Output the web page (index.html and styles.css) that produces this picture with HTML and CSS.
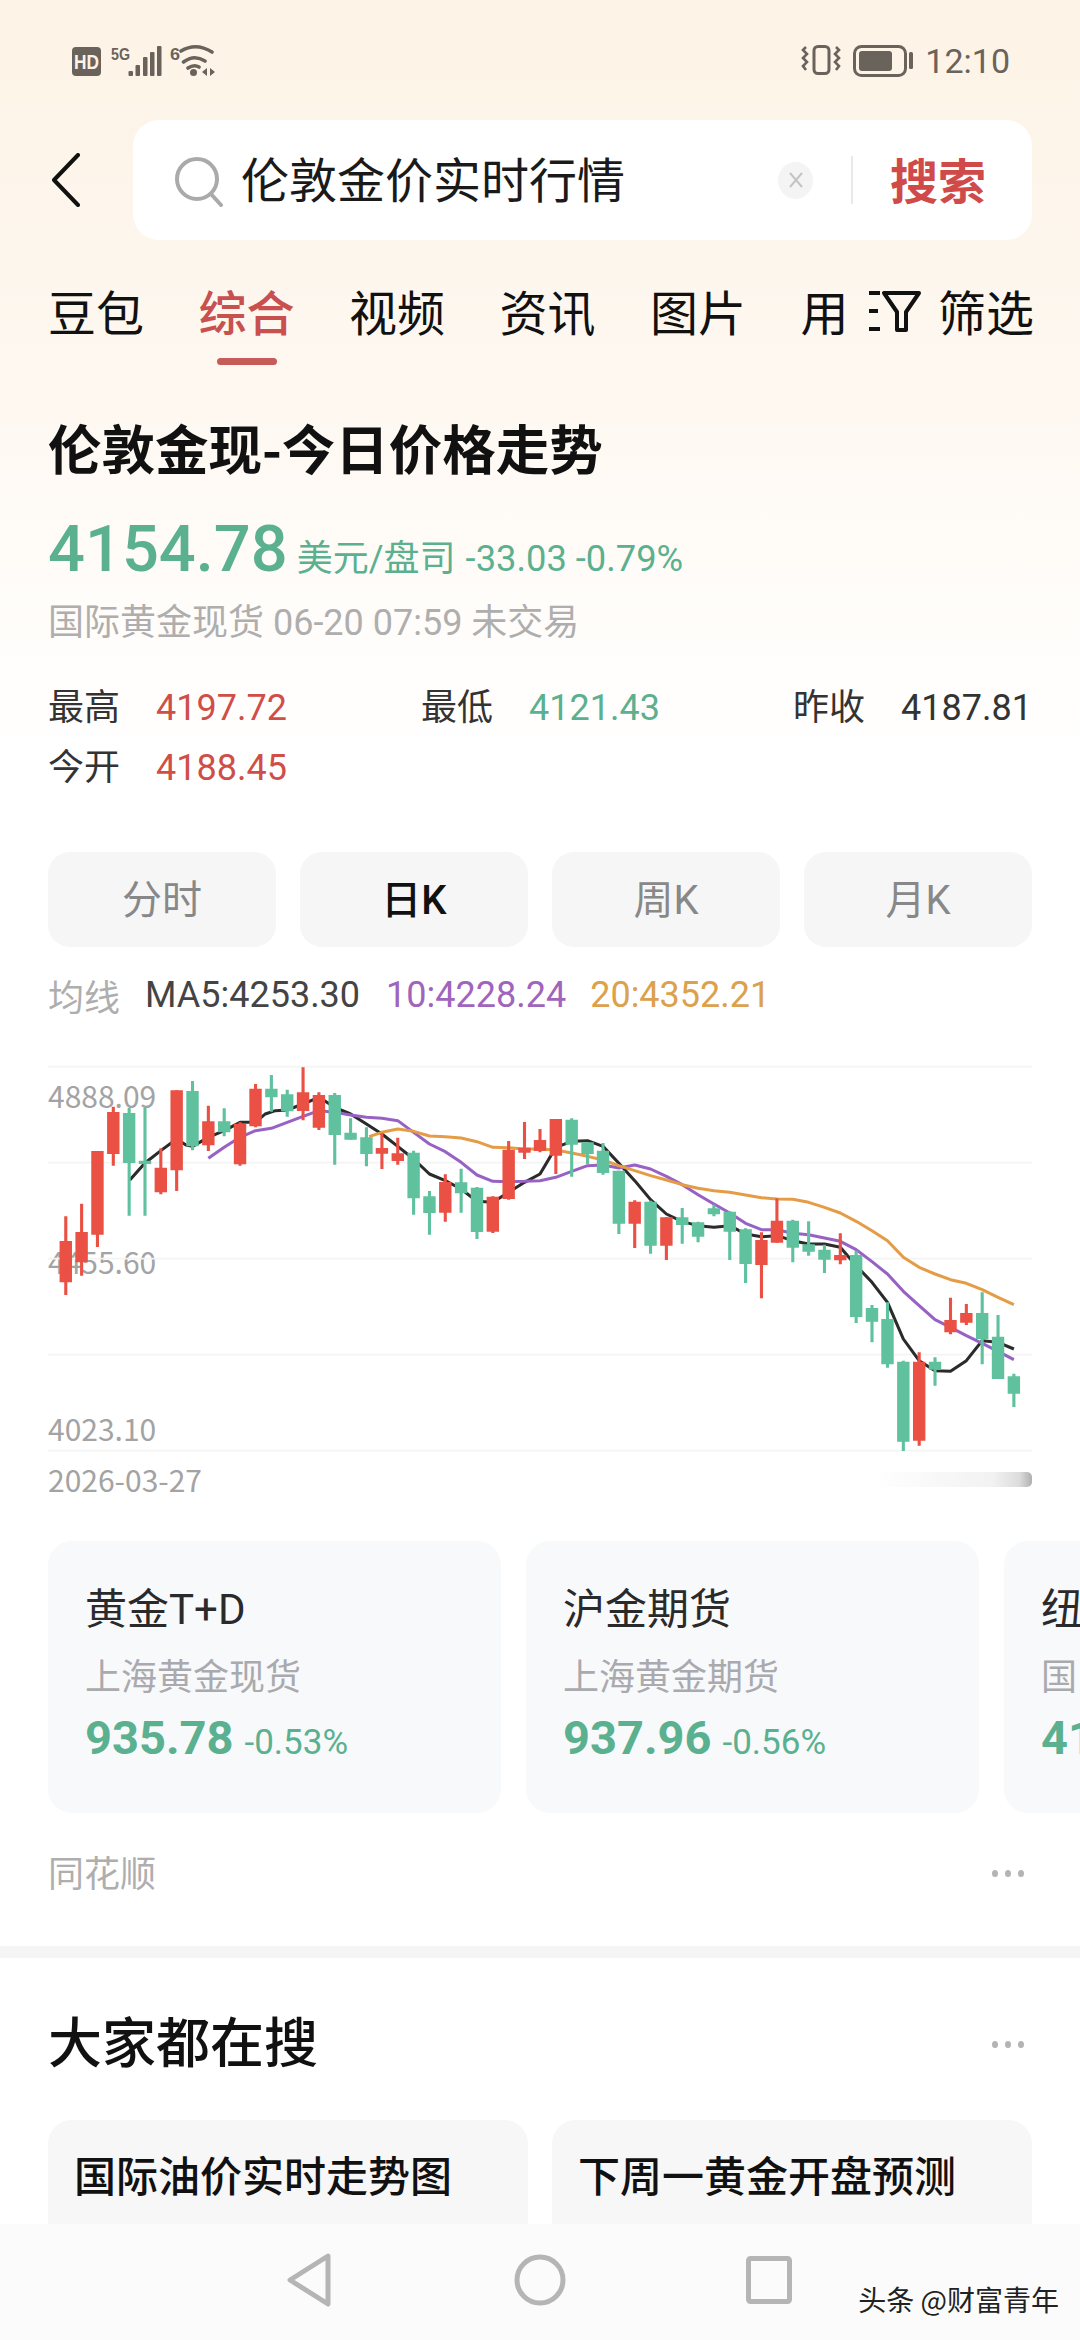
FILE: index.html
```html
<!DOCTYPE html>
<html lang="zh-CN">
<head>
<meta charset="utf-8">
<title>伦敦金价实时行情</title>
<link rel="stylesheet" href="styles.css">
</head>
<body>
<div class="screen">
  <div class="status">
    <svg class="st-left" width="146" height="34" viewBox="70 44 146 34">
      <rect x="72" y="47" width="29" height="29" rx="4" fill="#6a635c"/>
      <text x="74" y="69" class="st-hd" textLength="25" lengthAdjust="spacingAndGlyphs">HD</text>
      <text x="111" y="60" class="st-net" textLength="19" lengthAdjust="spacingAndGlyphs">5G</text>
      <rect x="128.5" y="71" width="4.5" height="5" rx="1" fill="#6a635c"/>
      <rect x="135.5" y="65" width="4.5" height="11" rx="1" fill="#6a635c"/>
      <rect x="143" y="57" width="4.5" height="19" rx="1" fill="#6a635c"/>
      <rect x="150" y="52" width="4.5" height="24" rx="1" fill="#6a635c"/>
      <rect x="157" y="46" width="4.5" height="30" rx="1" fill="#6a635c"/>
      <text x="170" y="60" class="st-net" textLength="10" lengthAdjust="spacingAndGlyphs">6</text>
      <path d="M181 51Q196 42 212 52M183.500 62Q194 54 205 61M188 68Q194 64 199 67" fill="none" stroke="#6a635c" stroke-width="3.600" stroke-linecap="round"/>
      <circle cx="193.500" cy="72.500" r="3.500" fill="#6a635c"/>
      <path d="M202 72l5-4v8zM210 68l5 4-5 4z" fill="#6a635c"/>
    </svg>
    <div class="st-right">
      <svg width="114" height="36" viewBox="802 44 114 36">
        <rect x="816" y="47.500" width="15" height="27" rx="4" fill="none" stroke="#6a635c" stroke-width="3"/>
        <path d="M808 48l-3 3 4 4-4 4 4 4-4 4 3 4M838 48l3 3-4 4 4 4-4 4 4 4-3 4" fill="none" stroke="#6a635c" stroke-width="2.600"/>
        <rect x="856.500" y="47.500" width="51" height="29" rx="7" fill="none" stroke="#6a635c" stroke-width="3"/>
        <rect x="861" y="52" width="33" height="20" rx="3" fill="#6a635c"/>
        <rect x="911" y="53" width="4" height="17" rx="1.500" fill="#6a635c"/>
      </svg>
      <span class="time">12:10</span>
    </div>
  </div>

  <div class="search-row">
    <svg class="back" width="30" height="54" viewBox="0 0 30 54"><path d="M27 2L3 27l24 25" fill="none" stroke="#111" stroke-width="4" stroke-linecap="round" stroke-linejoin="round"/></svg>
    <div class="search-box">
      <svg class="s-icon" width="50" height="50" viewBox="0 0 50 50"><circle cx="23" cy="22" r="20" fill="none" stroke="#aaa" stroke-width="4"/><path d="M37 37l10 11" stroke="#aaa" stroke-width="4" stroke-linecap="round"/></svg>
      <span class="s-text">伦敦金价实时行情</span>
      <span class="s-clear"><svg width="16" height="18" viewBox="0 0 16 18"><path d="M2 2l12 14M14 2L2 16" stroke="#c4c4c4" stroke-width="2"/></svg></span>
      <span class="s-div"></span>
      <span class="s-btn">搜索</span>
    </div>
  </div>

  <div class="tabs">
    <div class="tab">豆包</div>
    <div class="tab tab-on">综合<i class="tab-bar"></i></div>
    <div class="tab">视频</div>
    <div class="tab">资讯</div>
    <div class="tab">图片</div>
    <div class="tab tab-cut">用</div>
    <div class="filter">
      <svg width="54" height="42" viewBox="0 0 54 42"><path d="M1 3h11M1 21h9M1 39h11" stroke="#111" stroke-width="4"/><path d="M16 3h35L38 22v18H29V22z" fill="none" stroke="#111" stroke-width="4" stroke-linejoin="round"/></svg>
      <span>筛选</span>
    </div>
  </div>

  <h1 class="title">伦敦金现-今日价格走势</h1>
  <div class="price-row">
    <span class="price">4154.78</span>
    <span class="unit">美元/盘司</span>
    <span class="chg">-33.03 -0.79%</span>
  </div>
  <div class="meta">国际黄金现货 06-20 07:59 未交易</div>

  <div class="stats">
    <div class="stat"><span class="s-lab">最高</span><span class="s-val up">4197.72</span></div>
    <div class="stat"><span class="s-lab">最低</span><span class="s-val down">4121.43</span></div>
    <div class="stat"><span class="s-lab">昨收</span><span class="s-val">4187.81</span></div>
    <div class="stat"><span class="s-lab">今开</span><span class="s-val up">4188.45</span></div>
  </div>

  <div class="ranges">
    <div class="range">分时</div>
    <div class="range range-on">日K</div>
    <div class="range">周K</div>
    <div class="range">月K</div>
  </div>

  <div class="ma">
    <span class="ma-lab">均线</span>
    <span class="ma5">MA5:4253.30</span>
    <span class="ma10">10:4228.24</span>
    <span class="ma20">20:4352.21</span>
  </div>

  <div class="chart">
    <span class="y y1">4888.09</span>
    <span class="y y2">4455.60</span>
    <span class="y y3">4023.10</span>
    <svg class="plot" width="1080" height="425" viewBox="0 0 3136 1275" preserveAspectRatio="none">
      <path class="grid" d="M139 83H2997M139 371H2997M139 659H2997M139 947H2997M139 1235H2997"/>
      <polyline class="ln k" points="377,423 421,372 467,335 513,300 540,318 559,322 605,295 651,275 697,250 742,250 770,225 800,215 834,213 880,195 926,175 972,205 1018,225 1064,255 1109,285 1155,322 1201,360 1247,405 1293,425 1339,450 1385,487 1431,490 1477,460 1523,430 1568,405 1614,325 1660,307 1706,305 1751,322 1797,373 1843,425 1889,482 1935,525 1981,548 2027,560 2073,565 2119,560 2165,585 2211,593 2256,590 2302,605 2348,615 2394,615 2440,625 2486,680 2532,730 2577,790 2623,900 2669,965 2715,995 2760,997 2806,965 2852,905 2898,910 2944,930"/>
      <polyline class="ln p" points="605,358 651,325 697,295 742,275 788,268 834,250 880,232 926,215 972,220 1018,228 1064,235 1109,238 1155,245 1201,280 1247,315 1293,338 1339,370 1385,408 1431,427 1477,428 1523,427 1568,425 1614,415 1660,397 1706,380 1751,378 1797,387 1843,378 1889,390 1935,412 1981,437 2027,467 2073,495 2119,522 2165,553 2211,572 2256,572 2302,583 2348,587 2394,597 2440,607 2486,632 2532,668 2577,705 2623,757 2669,800 2715,842 2760,865 2806,890 2852,913 2898,937 2944,962"/>
      <polyline class="ln o" points="1072,293 1109,280 1155,270 1201,277 1247,291 1293,293 1339,297 1385,308 1431,325 1477,326 1523,330 1568,330 1614,333 1660,342 1706,352 1751,363 1797,380 1843,395 1889,410 1935,423 1981,437 2027,448 2073,455 2119,460 2165,468 2211,476 2256,480 2302,481 2348,490 2394,505 2440,522 2486,547 2532,575 2577,605 2623,655 2669,685 2715,705 2760,722 2806,733 2852,752 2898,775 2944,797"/>
      <path class="wick red" d="M191 532V768M237 494V710M283 336V624M329 203V380M467 328V466M513 154V456M605 200V336M697 250V380M742 135V265M880 85V244M926 160V273M1109 283V390M1155 296V377M1293 406V548M1431 472V582M1477 306V482M1523 249V360M1568 270V340M1614 240V405M1843 484V627M1935 535V663M2211 580V778M2256 478V611M2440 583V676M2669 940V1220M2760 776V886M2806 795V858"/>
      <path class="wick green" d="M375 207V530M421 205V530M559 126V334M651 208V292M788 108V218M834 152V233M972 162V377M1018 238V302M1064 265V382M1201 335V527M1247 456V587M1339 389V521M1385 444V600M1660 238V413M1706 310V375M1751 312V407M1797 395V585M1889 485V644M1981 507V614M2027 548V610M2073 497V532M2119 517V663M2165 568V732M2302 542V670M2348 547V650M2394 617V702M2486 635V852M2532 798V910M2577 790V986M2623 965V1236M2715 955V1040M2852 760V976M2898 828V1020M2944 1004V1104"/>
      <path class="body red" d="M191 606V730M237 579V670M283 336V587M329 219V345M467 386V460M513 154V394M605 247V319M697 254V376M742 149V262M880 160V216M926 168V266M1109 327V344M1155 343V366M1293 429V521M1431 473V578M1477 332V480M1523 326V341M1568 303V336M1614 240V350M1843 488V554M1935 535V620M2211 603V678M2256 545V611M2440 648V664M2669 968V1205M2760 843V880M2806 822V851"/>
      <path class="body green" d="M375 222V372M421 365V375M559 156V322M651 247V280M788 149V175M834 166V217M972 168V288M1018 281V302M1064 295V345M1201 341V478M1247 472V522M1339 430V463M1385 446V579M1660 242V317M1706 310V345M1751 335V402M1797 395V554M1889 488V620M1981 535V558M2027 550V593M2073 508V526M2119 518V578M2165 571V675M2302 545V626M2348 616V638M2394 632V662M2486 648V834M2532 807V848M2577 840V976M2623 968V1208M2715 968V992M2852 822V900M2898 893V1020M2944 1012V1064"/>
    </svg>
  </div>
  <div class="date-row">
    <span class="date">2026-03-27</span>
    <span class="blur"></span>
  </div>

  <div class="cards">
    <div class="card">
      <div class="c-title">黄金T+D</div>
      <div class="c-sub">上海黄金现货</div>
      <div class="c-val"><b>935.78</b><span>-0.53%</span></div>
    </div>
    <div class="card">
      <div class="c-title">沪金期货</div>
      <div class="c-sub">上海黄金期货</div>
      <div class="c-val"><b>937.96</b><span>-0.56%</span></div>
    </div>
    <div class="card">
      <div class="c-title">纽</div>
      <div class="c-sub">国</div>
      <div class="c-val"><b>41</b></div>
    </div>
  </div>

  <div class="source">
    <span>同花顺</span>
    <span class="dots dots-src"><i></i><i></i><i></i></span>
  </div>

  <div class="band"></div>

  <div class="hot-head">
    <h2>大家都在搜</h2>
    <span class="dots dots-hot"><i></i><i></i><i></i></span>
  </div>
  <div class="hot">
    <div class="hot-card">国际油价实时走势图</div>
    <div class="hot-card">下周一黄金开盘预测</div>
  </div>

  <div class="navbar">
    <svg width="48" height="54" viewBox="0 0 48 54"><path d="M42 3L4 27l38 24z" fill="none" stroke="#b5b5b5" stroke-width="5" stroke-linejoin="round"/></svg>
    <svg width="52" height="52" viewBox="0 0 52 52"><circle cx="26" cy="26" r="23" fill="none" stroke="#b5b5b5" stroke-width="5"/></svg>
    <svg width="46" height="48" viewBox="0 0 46 48"><rect x="2.500" y="2.500" width="41" height="43" rx="2" fill="none" stroke="#b5b5b5" stroke-width="5"/></svg>
  </div>
  <div class="mark">头条 @财富青年</div>
</div>
</body>
</html>
```

FILE: styles.css
```css
* { box-sizing: border-box; }
html, body { margin: 0; padding: 0; }
body { background: #fff; font-family: Roboto, "Noto Sans CJK SC", sans-serif; }
.screen {
  position: relative;
  width: 1080px;
  height: 2340px;
  overflow: hidden;
  background: linear-gradient(180deg, #fdf3e6 0, #fef8f1 400px, #fffdfb 640px, #fff 760px);
  color: #111;
}
.status {
  height: 120px;
  padding: 2px 70px 0 70px;
  display: flex;
  align-items: center;
  justify-content: space-between;
}
.st-left, .st-right svg { display: block; }
.st-right { display: flex; align-items: center; gap: 11px; }
.st-hd { font: 700 21px "Liberation Sans", sans-serif; fill: #fdf3e6; }
.st-net { font: 700 17px "Liberation Sans", sans-serif; fill: #6a635c; }
.time { font-size: 34px; color: #6a635c; line-height: 40px; }

.search-row {
  height: 120px;
  padding: 0 48px 0 51px;
  display: flex;
  align-items: center;
  justify-content: space-between;
}
.back { display: block; margin-top: 0; }
.search-box {
  width: 899px;
  height: 120px;
  background: #fff;
  border-radius: 26px;
  padding: 0 36px 0 41px;
  display: flex;
  align-items: center;
}
.s-icon { display: block; flex: none; margin-top: 4px; }
.s-text { font-size: 48px; line-height: 64px; margin: -6px 0 0 17px; color: #1a1a1a; width: 537px; flex: none; font-family: "Noto Sans CJK SC", sans-serif; }
.s-clear {
  width: 35px; height: 37px; border-radius: 50%;
  background: #f4f4f4;
  display: flex; align-items: center; justify-content: center;
  flex: none;
}
.s-div { width: 2px; height: 48px; background: #e9e9e9; margin-left: 38px; flex: none; }
.s-btn { font-size: 48px; line-height: 64px; margin: -4px 0 0 37px; font-weight: 700; color: #cf4a48; flex: none; font-family: "Noto Sans CJK SC", sans-serif; }

.tabs {
  position: relative;
  height: 125px;
  padding: 38px 0 0 48px;
  display: flex;
  gap: 54.500px;
  font-family: "Noto Sans CJK SC", sans-serif;
}
.tab { position: relative; width: 96px; font-size: 48px; line-height: 64px; white-space: nowrap; }
.tab-on { color: #c8504f; font-weight: 500; }
.tab-bar {
  position: absolute; left: 18px; top: 80px;
  width: 60px; height: 7px; border-radius: 4px;
  background: #c65c5a;
}
.tab-cut { width: 44px; }
.filter { display: flex; align-items: center; gap: 16px; font-size: 48px; line-height: 64px; position: absolute; left: 868px; top: 38px; }
.filter svg { display: block; margin-top: 1px; }

.title {
  margin: 47px 48px 0;
  font-family: "Noto Sans CJK SC", sans-serif;
  font-size: 53.500px;
  line-height: 70px;
  font-weight: 700;
  color: #111;
}
.price-row {
  margin: 25px 48px 0;
  height: 84px;
  display: flex;
  align-items: baseline;
  color: #5bb08f;
  line-height: 84px;
}
.price { font-size: 65px; font-weight: 500; }
.unit { font-size: 36px; margin-left: 9px; }
.chg { font-size: 36.300px; margin-left: 10px; }
.meta {
  margin: 7px 48px 0;
  font-size: 36px;
  line-height: 50px;
  color: #aeaeae;
}
.stats {
  margin: 30px 48px 0;
  display: grid;
  grid-template-columns: 373px 372px 239px;
  grid-auto-rows: 60px;
  font-size: 36px;
  line-height: 60px;
}
.stat { display: flex; }
.s-lab { width: 108px; color: #333; flex: none; }
.s-val { color: #333; }
.up { color: #cf4f48; }
.down { color: #5bb08f; }

.ranges {
  margin: 54px 48px 0;
  display: grid;
  grid-template-columns: repeat(4, 1fr);
  gap: 24px;
}
.range {
  height: 95px;
  padding-bottom: 6px;
  border-radius: 22px;
  background: #f6f6f6;
  color: #888;
  font-size: 40px;
  display: flex;
  align-items: center;
  justify-content: center;
}
.range-on { color: #111; font-weight: 500; }

.ma {
  margin: 23px 48px 0;
  height: 50px;
  display: flex;
  align-items: center;
  font-size: 36px;
  color: #444;
}
.ma-lab { color: #aeaeae; margin-right: 25px; }
.ma10 { color: #a064bd; margin-left: 26px; }
.ma20 { color: #dba14d; margin-left: 24px; }

.chart { position: relative; height: 425px; margin-top: 19px; }
.plot { position: absolute; left: 0; top: 0; display: block; overflow: visible; }
.y {
  position: absolute; left: 48px;
  font: 400 30px/40px "Noto Sans CJK SC", sans-serif;
  color: #a3a3a3;
}
.y1 { top: 36px; }
.y2 { top: 202px; }
.y3 { top: 369px; }
.grid { stroke: #f4f4f4; stroke-width: 5; fill: none; }
.ln { fill: none; stroke-width: 9; stroke-linejoin: round; stroke-linecap: butt; }
.k { stroke: #2b2b2b; }
.p { stroke: #9862c4; }
.o { stroke: #e49c47; }
.wick { stroke-width: 9; fill: none; }
.body { stroke-width: 36; fill: none; }
.red { stroke: #ea5043; }
.green { stroke: #5fc19e; }

.date-row {
  height: 35px;
  margin: -2px 48px 0;
  display: flex;
  align-items: center;
  justify-content: space-between;
}
.date { font: 400 30px/35px "Noto Sans CJK SC", sans-serif; color: #a3a3a3; }
.blur {
  width: 158px; height: 15px;
  border-radius: 0 5px 5px 0;
  background: linear-gradient(90deg, #fff 0, #f8f8f8 40%, #f2f2f2 75%, #dcdcdc 92%, #b0b0b0 100%);
}

.cards {
  margin-top: 44px;
  padding-left: 48px;
  display: flex;
  gap: 25px;
  overflow: hidden;
}
.card {
  flex: none;
  width: 453px;
  height: 272px;
  padding: 40px 0 0 37px;
  border-radius: 24px;
  background: #f8f9fb;
  white-space: nowrap;
}
.c-title { font-size: 42px; line-height: 58px; color: #2a2a2a; }
.c-sub { font-size: 36px; line-height: 50px; margin-top: 14px; color: #aaaaae; }
.c-val { margin-top: 5px; line-height: 60px; color: #5bb08f; }
.c-val b { font-size: 47px; font-weight: 700; }
.c-val span { font-size: 35px; margin-left: 11px; }

.source {
  margin: 33px 56px 0 48px;
  height: 50px;
  display: flex;
  align-items: center;
  justify-content: space-between;
  font-size: 36px;
  color: #aeaeae;
}
.dots { display: flex; gap: 7px; }
.dots-src { margin-top: 4px; }
.dots-hot { margin-top: 9px; }
.dots i { display: block; width: 6px; height: 7px; border-radius: 50%; background: #b4b4b4; }
.band { height: 12px; margin-top: 50px; background: #f5f5f5; }

.hot-head {
  margin: 46px 56px 0 48px;
  height: 72px;
  display: flex;
  align-items: center;
  justify-content: space-between;
}
.hot-head h2 { margin: 0; font: 500 54px/72px "Noto Sans CJK SC", sans-serif; color: #111; }
.hot {
  margin: 44px 48px 0;
  display: grid;
  grid-template-columns: 480px 480px;
  gap: 24px;
}
.hot-card {
  height: 180px;
  border-radius: 24px;
  background: #f7f7f7;
  padding: 25px 0 0 26px;
  font: 500 42px/58px "Noto Sans CJK SC", sans-serif;
  color: #111;
}

.navbar {
  position: absolute;
  left: 0; right: 0; bottom: 0;
  height: 116px;
  padding: 0 288px 0 286px;
  display: flex;
  align-items: center;
  justify-content: space-between;
  background: #fbfbfb;
}
.navbar svg { display: block; margin-top: -4px; }
.mark {
  position: absolute;
  right: 21px;
  top: 2279px;
  font: 400 28px/40px "Noto Sans CJK SC", sans-serif;
  color: #222;
  text-shadow: 0 0 2px #fff;
  white-space: nowrap;
}
```
